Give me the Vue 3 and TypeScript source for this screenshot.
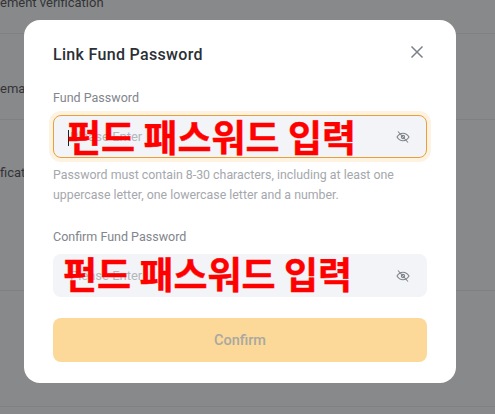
<script setup lang="ts">
const rows = [
  { id: 1, text: 'ement verification', height: 34 },
  { id: 2, text: 'ema', height: 86 },
  { id: 3, text: 'ficat', height: 171 },
  { id: 4, text: '', height: 116 },
]
</script>

<template>
  <div class="page">
    <div class="rows">
      <div v-for="r in rows" :key="r.id" class="row" :style="{ height: r.height + 'px' }">
        <span class="row-text">{{ r.text }}</span>
      </div>
    </div>
    <div class="overlay">
      <div class="modal">
        <div class="head">
          <h2 class="title">Link Fund Password</h2>
          <svg class="close" viewBox="0 0 14 14" width="14" height="14" fill="none" stroke="#7c8088" stroke-width="1.5">
            <path d="M1.5 1.5 12.5 12.5M12.5 1.5 1.5 12.5" />
          </svg>
        </div>

        <label class="label first">Fund Password</label>
        <div class="field focused">
          <span class="caret"></span>
          <input class="input" type="password" placeholder="Please Enter" />
          <svg class="eye" viewBox="0 0 14 14" width="14" height="14" fill="none" stroke="#7f838a" stroke-width="1.1">
            <path d="M1 7C2.6 4.4 4.6 3.2 7 3.2S11.4 4.4 13 7C11.4 9.6 9.4 10.8 7 10.8S2.6 9.6 1 7Z" />
            <circle cx="7" cy="7" r="1.6" />
            <path d="M2 1.5 12 12.5" />
          </svg>
          <span class="stamp stamp-a">펀드 패스워드 입력</span>
        </div>
        <p class="hint">Password must contain 8-30 characters, including at least one uppercase letter, one lowercase letter and a number.</p>

        <label class="label second">Confirm Fund Password</label>
        <div class="field">
          <input class="input" type="password" placeholder="Please Enter" />
          <svg class="eye" viewBox="0 0 14 14" width="14" height="14" fill="none" stroke="#7f838a" stroke-width="1.1">
            <path d="M1 7C2.6 4.4 4.6 3.2 7 3.2S11.4 4.4 13 7C11.4 9.6 9.4 10.8 7 10.8S2.6 9.6 1 7Z" />
            <circle cx="7" cy="7" r="1.6" />
            <path d="M2 1.5 12 12.5" />
          </svg>
          <span class="stamp stamp-b">펀드 패스워드 입력</span>
        </div>

        <button class="confirm" type="button">Confirm</button>
      </div>
    </div>
  </div>
</template>

<style scoped>
.page {
  position: relative;
  width: 495px;
  height: 414px;
  overflow: hidden;
  background: #fff;
  font-family: Roboto, "Liberation Sans", sans-serif;
}
.rows {
  display: flex;
  flex-direction: column;
}
.row {
  display: flex;
  align-items: flex-end;
  flex: none;
  border-bottom: 1px solid #ececec;
  box-sizing: border-box;
  overflow: hidden;
}
.row:nth-child(1) .row-text { margin-bottom: 22px; }
.row:nth-child(2) .row-text { margin-bottom: 22px; }
.row:nth-child(3) .row-text { margin-bottom: 109px; }
.row-text {
  font-size: 13px;
  line-height: 16px;
  color: #555;
  white-space: nowrap;
}
.overlay {
  position: absolute;
  inset: 0;
  background: rgba(17, 19, 24, 0.5);
}
.modal {
  position: absolute;
  left: 24px;
  top: 20px;
  width: 432px;
  height: 363px;
  box-sizing: border-box;
  padding: 0 29px;
  background: #fff;
  border-radius: 16px;
  display: flex;
  flex-direction: column;
}
.head {
  display: flex;
  align-items: center;
  justify-content: space-between;
  height: 24px;
  margin-top: 23px;
}
.title {
  margin: 0;
  font-size: 16px;
  line-height: 24px;
  font-weight: 500;
  color: #2b2f36;
  letter-spacing: 0.32px;
}
.close {
  margin-right: 3px;
  margin-top: -6px;
}
.label {
  display: block;
  font-size: 12.5px;
  line-height: 18px;
  color: #81858c;
}
.label.first { margin-top: 22px; margin-bottom: 8px; }
.label.second { margin-top: 23px; margin-bottom: 8px; }
.field {
  position: relative;
  display: flex;
  align-items: center;
  height: 43px;
  flex: none;
  box-sizing: border-box;
  padding: 0 16px;
  background: #f3f4f7;
  border: 1px solid transparent;
  border-radius: 8px;
}
.field.focused {
  border-color: #ea9f3a;
  box-shadow: 0 0 0 4px #fef3e0;
}
.input {
  flex: 1;
  min-width: 0;
  padding: 0;
  border: 0;
  outline: 0;
  background: transparent;
  font: inherit;
  font-size: 13px;
}
.input::placeholder {
  color: #b4b7bc;
}
.caret {
  position: absolute;
  left: 14px;
  top: 14px;
  width: 1px;
  height: 16px;
  background: #222;
}
.stamp {
  position: absolute;
  font-family: "Noto Sans CJK KR", sans-serif;
  font-size: 37px;
  line-height: 40px;
  font-weight: 700;
  -webkit-text-stroke: 0.4px #ff0000;
  color: #ff0000;
  white-space: nowrap;
  pointer-events: none;
}
.stamp-a { left: 13px; top: 0; }
.stamp-b { left: 9px; top: -2px; }
.hint {
  margin: 7px 0 0;
  font-size: 12.36px;
  line-height: 20px;
  color: #a5a8ad;
}
.confirm {
  margin-top: 21px;
  height: 44px;
  flex: none;
  border: 0;
  border-radius: 8px;
  background: #fcd999;
  color: #a9a8a0;
  font: inherit;
  font-size: 14.5px;
  font-weight: 500;
}
</style>
